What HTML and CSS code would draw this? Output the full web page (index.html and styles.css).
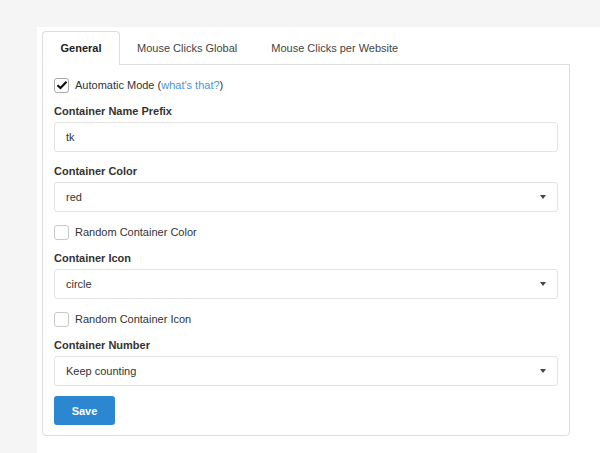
FILE: index.html
```html
<!DOCTYPE html>
<html>
<head>
<meta charset="utf-8">
<link rel="stylesheet" href="styles.css">
</head>
<body>
<div class="page">
  <div class="tabs">
    <div class="tab active">General</div>
    <div class="tab">Mouse Clicks Global</div>
    <div class="tab">Mouse Clicks per Website</div>
  </div>
  <div class="panel">
    <div class="check-row">
      <span class="box checked"><svg width="12" height="10" viewBox="0 0 12 10"><path d="M1.5 5.2 L4.5 8 L10.5 1.8" fill="none" stroke="#111" stroke-width="2.2"/></svg></span>
      <span class="check-label">Automatic Mode (<a class="link" href="#">what's that?</a>)</span>
    </div>
    <div class="group">
      <div class="label">Container Name Prefix</div>
      <div class="field">tk</div>
    </div>
    <div class="group">
      <div class="label">Container Color</div>
      <div class="field select">red<span class="caret"></span></div>
    </div>
    <div class="check-row">
      <span class="box"></span>
      <span class="check-label">Random Container Color</span>
    </div>
    <div class="group">
      <div class="label">Container Icon</div>
      <div class="field select">circle<span class="caret"></span></div>
    </div>
    <div class="check-row">
      <span class="box"></span>
      <span class="check-label">Random Container Icon</span>
    </div>
    <div class="group">
      <div class="label">Container Number</div>
      <div class="field select">Keep counting<span class="caret"></span></div>
    </div>
    <div class="actions">
      <button class="btn">Save</button>
    </div>
  </div>
</div>
</body>
</html>
```

FILE: styles.css
```css
html, body {
  margin: 0;
  padding: 0;
}
body {
  background: #f5f5f5;
  font-family: "Liberation Sans", Arial, sans-serif;
  font-size: 11px;
  color: #333;
  height: 453px;
  overflow: hidden;
}
.page {
  background: #fff;
  margin: 27px 0 0 37px;
  padding: 4px 31px 20px 5px;
  min-height: 430px;
  box-sizing: border-box;
}
.tabs {
  display: flex;
  height: 33px;
}
.tab {
  padding: 0 16px;
  line-height: 33px;
  color: #444;
  border: 1px solid transparent;
  border-bottom: none;
  border-radius: 4px 4px 0 0;
  box-sizing: border-box;
  height: 34px;
}
.tab.active {
  font-weight: bold;
  color: #222;
  border-color: #ddd;
  background: #fff;
  padding: 0 16px;
  width: 78px;
  text-align: center;
  line-height: 32px;
  position: relative;
  z-index: 1;
}
.panel {
  border: 1px solid #ddd;
  border-radius: 0 0 4px 4px;
  padding: 10px 11px 10px 11px;
  display: flex;
  flex-direction: column;
  gap: 10px;
  width: 528px;
  box-sizing: border-box;
}
.check-row {
  display: flex;
  align-items: center;
  height: 17px;
  padding-top: 3px;
  box-sizing: border-box;
}
.box {
  width: 13px;
  height: 13px;
  border: 1px solid #c8c8c8;
  border-radius: 3px;
  background: #fff;
  display: flex;
  align-items: center;
  justify-content: center;
  flex: none;
}
.box.checked {
  border-color: #a8a8a8;
}
.check-label {
  margin-left: 6px;
  line-height: 14px;
  color: #333;
}
.link {
  color: #4a94d8;
  text-decoration: none;
}
.group {
  display: flex;
  flex-direction: column;
  gap: 3px;
}
.label {
  font-weight: bold;
  line-height: 16px;
  padding-top: 1px;
  color: #333;
}
.field {
  height: 30px;
  border: 1px solid #e3e3e3;
  border-radius: 3px;
  box-sizing: border-box;
  padding: 0 11px;
  line-height: 28px;
  color: #333;
  display: flex;
  align-items: center;
  justify-content: space-between;
}
.caret {
  width: 0;
  height: 0;
  border-left: 3.5px solid transparent;
  border-right: 3.5px solid transparent;
  border-top: 4px solid #444;
  margin-right: 0;
}
.actions {
  display: flex;
}
.btn {
  background: #2c87d3;
  color: #fff;
  font-family: "Liberation Sans", Arial, sans-serif;
  font-weight: bold;
  font-size: 11px;
  border: none;
  border-radius: 3px;
  width: 61px;
  height: 29px;
  padding: 0;
}
```
